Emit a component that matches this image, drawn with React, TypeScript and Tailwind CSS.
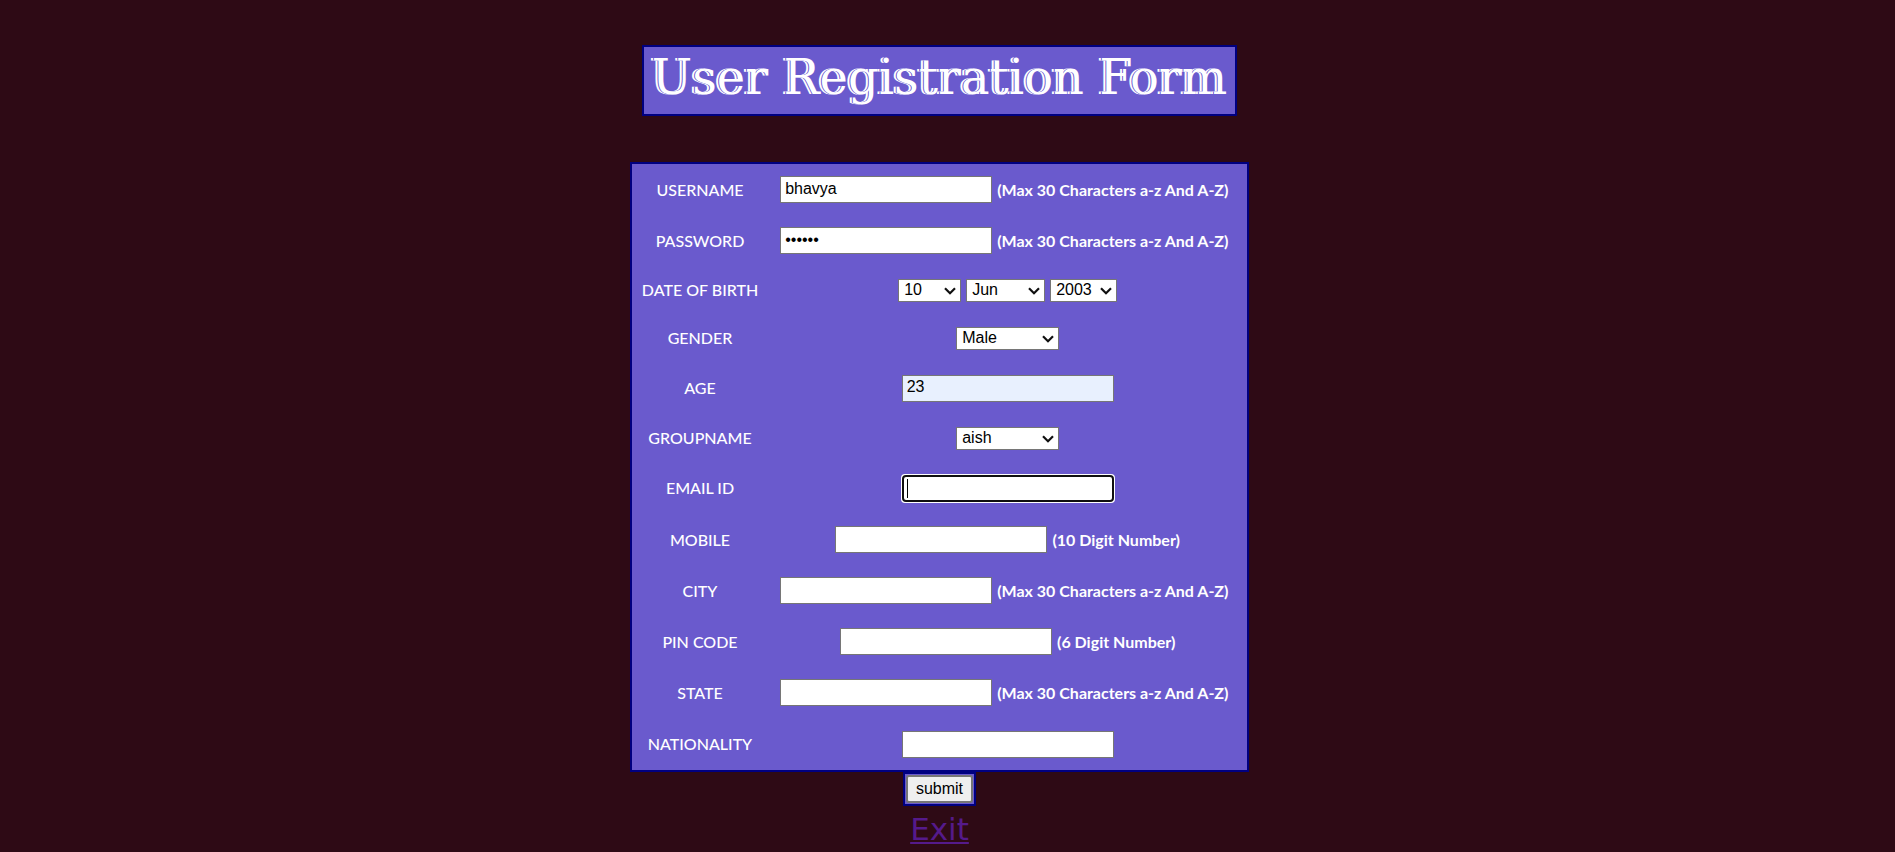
import React from "react";

const FIELD =
  "peer h-[27px] w-[212px] border border-[#767676] px-1 pb-0.5 font-['Liberation_Sans',Arial,sans-serif] text-base text-black";

const MONTHS = ["Jan", "Feb", "Mar", "Apr", "May", "Jun", "Jul", "Aug", "Sep", "Oct", "Nov", "Dec"];
const DAYS = Array.from({ length: 31 }, (_, i) => String(i + 1));
const YEARS = Array.from({ length: 40 }, (_, i) => String(2020 - i));

const NAME_HINT = "(Max 30 Characters a-z And A-Z)";

type RowProps = {
  id: string;
  label: string;
  height: string;
  children: React.ReactNode;
};

function Row({ id, label, height, children }: RowProps) {
  return (
    <tr className={height}>
      <td className="px-2.5 text-center align-middle">
        <label htmlFor={id}>{label}</label>
      </td>
      <td className="px-3 align-middle">
        <div className="flex items-center justify-center gap-[5px]">{children}</div>
      </td>
    </tr>
  );
}

type PickerProps = {
  id: string;
  ariaLabel?: string;
  width: string;
  value: string;
  options: string[];
};

function Picker({ id, ariaLabel, width, value, options }: PickerProps) {
  return (
    <div className={`relative flex ${width}`}>
      <select
        id={id}
        name={id}
        aria-label={ariaLabel}
        defaultValue={value}
        className="h-[23px] w-full appearance-none border border-[#767676] bg-white pl-[5px] font-['Liberation_Sans',Arial,sans-serif] text-base leading-5 text-black"
      >
        {options.map((o) => (
          <option key={o}>{o}</option>
        ))}
      </select>
      <svg
        viewBox="0 0 12 8"
        className="pointer-events-none absolute top-2 right-[5px] h-2 w-3"
        fill="none"
        stroke="#101010"
        strokeWidth="2.2"
        aria-hidden="true"
      >
        <path d="M1 1.2 L6 6.2 L11 1.2" />
      </svg>
    </div>
  );
}

type InputRowProps = {
  id: string;
  label: string;
  hint?: string;
  type?: string;
  value?: string;
  autoFocus?: boolean;
  filled?: boolean;
};

function InputRow({ id, label, hint, type = "text", value, autoFocus, filled }: InputRowProps) {
  return (
    <Row id={id} label={label} height={hint ? "h-[51px]" : "h-[52px]"}>
      <div className="relative flex">
        <input
          id={id}
          name={id}
          type={type}
          defaultValue={value}
          placeholder=" "
          autoFocus={autoFocus}
          className={`${FIELD} placeholder-shown:caret-transparent ${filled ? "bg-[#e8f0fe]" : "bg-white"}`}
        />
        <span className="pointer-events-none absolute top-1 left-[5px] hidden h-[19px] w-px bg-black peer-focus:peer-placeholder-shown:block" />
      </div>
      {hint && (
        <span className={`font-bold whitespace-nowrap ${hint === NAME_HINT ? "min-w-[238px]" : "min-w-0"}`}>
          {hint}
        </span>
      )}
    </Row>
  );
}

export default function App() {
  return (
    <main className="flex min-h-screen flex-col items-center bg-[#2e0a15] pt-[45px] pr-4 font-[Lato,Calibri,sans-serif] text-base text-white">
      <h1 className="mb-[46px] border-2 border-[#000080] bg-[#6a5acd] px-2 pb-1.5 font-['DejaVu_Serif',serif] text-[48px] leading-[61px] whitespace-nowrap [text-shadow:-1px_0_0_#6a5acd,-3px_0_0_#ffffff]">
        User Registration Form
      </h1>

      <form className="flex flex-col items-center" onSubmit={(e) => e.preventDefault()}>
        <table className="border-separate border-spacing-0 border-2 border-[#000080] bg-[#6a5acd] font-medium">
          <tbody>
            <InputRow id="username" label="USERNAME" hint={NAME_HINT} value="bhavya" />
            <InputRow id="password" label="PASSWORD" hint={NAME_HINT} type="password" value="secret" />
            <Row id="day" label="DATE OF BIRTH" height="h-12">
              <Picker id="day" width="w-[63px]" value="10" options={DAYS} />
              <Picker id="month" ariaLabel="Month" width="w-[79px]" value="Jun" options={MONTHS} />
              <Picker id="year" ariaLabel="Year" width="w-[67px]" value="2003" options={YEARS} />
            </Row>
            <Row id="gender" label="GENDER" height="h-12">
              <Picker id="gender" width="w-[103px]" value="Male" options={["Male", "Female"]} />
            </Row>
            <InputRow id="age" label="AGE" value="23" filled />
            <Row id="groupname" label="GROUPNAME" height="h-12">
              <Picker id="groupname" width="w-[103px]" value="aish" options={["aish"]} />
            </Row>
            <InputRow id="email" label="EMAIL ID" autoFocus />
            <InputRow id="mobile" label="MOBILE" hint="(10 Digit Number)" />
            <InputRow id="city" label="CITY" hint={NAME_HINT} />
            <InputRow id="pincode" label="PIN CODE" hint="(6 Digit Number)" />
            <InputRow id="state" label="STATE" hint={NAME_HINT} />
            <InputRow id="nationality" label="NATIONALITY" />
          </tbody>
        </table>

        <div className="flex border-2 border-[#000080] bg-[#6a5acd] p-px">
          <button
            type="submit"
            className="h-7 rounded-[3px] border-2 border-[#767676] bg-[#efefef] px-2 font-['Liberation_Sans',Arial,sans-serif] text-base leading-5 text-black"
          >
            submit
          </button>
        </div>
      </form>

      <a
        href="#exit"
        className="font-['Comic_Sans_MS','DejaVu_Sans',sans-serif] text-[31px] leading-[46px] text-[#551a8b] underline decoration-2 underline-offset-2"
      >
        Exit
      </a>
    </main>
  );
}
